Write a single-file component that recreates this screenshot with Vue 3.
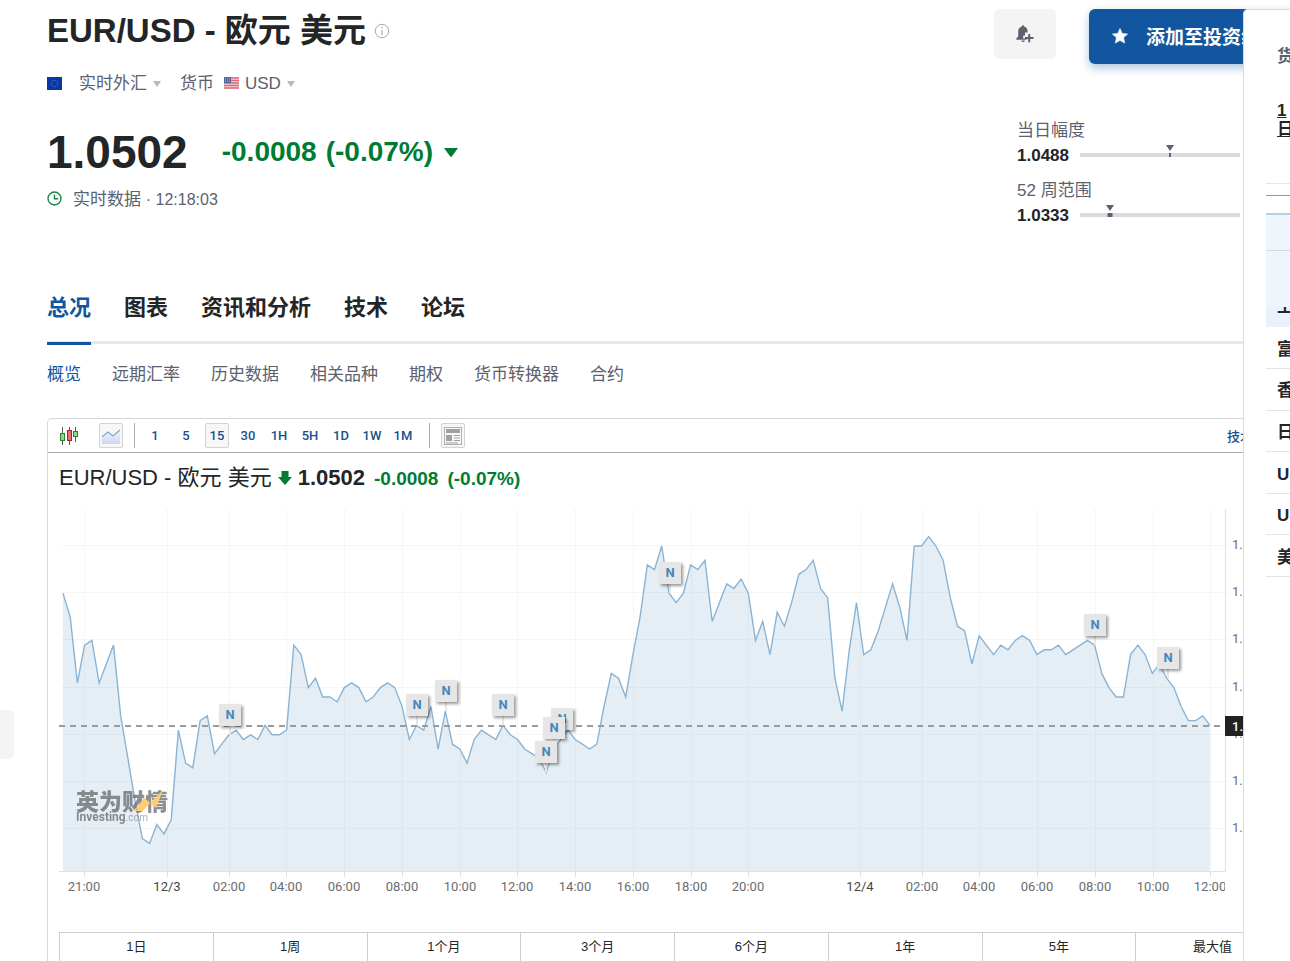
<script setup>
const tabs = ['总况', '图表', '资讯和分析', '技术', '论坛']
const subTabs = ['概览', '远期汇率', '历史数据', '相关品种', '期权', '货币转换器', '合约']
const intervals = ['1', '5', '15', '30', '1H', '5H', '1D', '1W', '1M']
const periods = ['1日', '1周', '1个月', '3个月', '6个月', '1年', '5年', '最大值']
const quotes = ['富时中国A50', '香港恒生指数', '日经225', 'US 30', 'US 500', '美元指数']

const ranges = [
  { label: '当日幅度', low: '1.0488', high: '1.0544', pos: 56, size: 2 },
  { label: '52 周范围', low: '1.0333', high: '1.1214', pos: 19, size: 5 }
]

// Pips below 1.0540, one value for every 15 minutes
const pips = [
  10, 15, 29, 21, 20, 29, 25, 21, 36, 45, 54, 62, 63, 59, 61, 58, 39, 46, 47, 37,
  36, 44, 42, 40, 39, 41, 40, 41, 38, 40, 40, 39, 21, 23, 30, 28, 32, 32, 33, 30,
  29, 30, 33, 32, 30, 29, 30, 34, 41, 38, 39, 34, 43, 35, 42, 43, 46, 41, 39, 40,
  41, 38, 40, 41, 43, 44, 45, 48, 43, 41, 39, 41, 42, 43, 42, 34, 27, 28, 32, 23,
  15, 4, 5, 0, 10, 12, 10, 4, 5, 3, 16, 12, 8, 9, 7, 10, 20, 16, 23, 14,
  17, 12, 6, 5, 3, 9, 11, 28, 35, 22, 12, 23, 22, 18, 13, 8, 13, 20, 0, 0,
  -2, 0, 3, 11, 17, 18, 25, 19, 21, 23, 21, 22, 20, 19, 20, 23, 22, 22, 21, 23,
  22, 21, 20, 21, 27, 30, 32, 32, 23, 21, 23, 27, 25, 28, 30, 34, 37, 37, 36, 38
]
const px = (i) => 4 + (i * 1147) / 159
const py = (p) => 46 + p * 4.72
const line = pips.map((p, i) => `${px(i).toFixed(1)},${py(p).toFixed(1)}`).join(' ')
const area = `4,371 ${line} 1151,371`

const times = [
  [25, '21:00'], [108, '12/3', true], [170, '02:00'], [227, '04:00'], [285, '06:00'],
  [343, '08:00'], [401, '10:00'], [458, '12:00'], [516, '14:00'], [574, '16:00'],
  [632, '18:00'], [689, '20:00'], [801, '12/4', true], [863, '02:00'], [920, '04:00'],
  [978, '06:00'], [1036, '08:00'], [1094, '10:00'], [1151, '12:00']
]
const prices = ['1.0540', '1.0530', '1.0520', '1.0510', '1.0500', '1.0490', '1.0480']
const flags = [
  [160, 204, 23], [347, 194, 49], [376, 180, 53], [433, 194, 61], [492, 208, 70],
  [484, 217, 69], [476, 241, 67], [600, 62, 84], [1025, 114, 143], [1098, 147, 153]
]
</script>

<template>
  <div class="page">
    <button class="drawer" aria-label="展开"></button>
    <main>
      <header class="top">
        <section class="instrument">
          <h1>
            EUR/USD - 欧元 美元
            <svg class="info" width="16" height="16" viewBox="0 0 16 16" fill="none" stroke="#a5a8ad">
              <circle cx="8" cy="8" r="6.7" /><path d="M8 7v5M8 4v1.5" stroke-width="1.2" />
            </svg>
          </h1>
          <div class="market">
            <svg class="eu" width="15" height="13" viewBox="0 0 15 13">
              <rect width="15" height="13" fill="#0a37a5" />
              <circle cx="7.5" cy="6.5" r="3.2" fill="none" stroke="#637a9c" stroke-dasharray="1 .7" />
            </svg>
            <a href="#market">实时外汇</a><i class="caret"></i>
            <span class="currency">货币</span>
            <svg class="us" width="15" height="12" viewBox="0 0 15 12">
              <rect width="15" height="12" fill="#f4dadd" />
              <path d="M0 1h15M0 3.5h15M0 6h15M0 8.5h15M0 11h15" stroke="#db6874" stroke-width="1.3" />
              <rect width="7" height="6" fill="#59659a" />
              <path d="M1 1.5h5M1 3h5M1 4.5h5" stroke="#aab0cf" stroke-dasharray="1 1" stroke-width=".7" />
            </svg>
            <a href="#usd">USD</a><i class="caret"></i>
          </div>
          <div class="price">
            <strong>1.0502</strong>
            <span class="change">-0.0008</span><span class="percent">(-0.07%)</span>
            <svg width="14" height="9" viewBox="0 0 14 9"><path d="M0 0h14L7.8 8.4q-.8.9-1.6 0z" fill="#007c32" /></svg>
          </div>
          <div class="time">
            <svg width="15" height="15" viewBox="0 0 15 15" fill="none" stroke="#1b8547" stroke-width="1.4">
              <circle cx="7.5" cy="7.5" r="6.5" /><path d="M7.5 3.5v4.2h3.7" />
            </svg>
            <span>实时数据 <small>· 12:18:03</small></span>
          </div>
        </section>
        <section class="side-actions">
          <div class="actions">
            <button class="alert" aria-label="创建提醒">
              <svg width="20" height="20" viewBox="0 0 20 20" fill="#5b616e">
                <path d="M8 1.2q1.1 0 1.2 1.2 3.4 1 3.4 5.1v1H10v3H8.2v3h3.4v1.2H1.3v-1.3l1.9-2V7.5q0-4.1 3.6-5.1Q7 1.2 8 1.2zM6.2 16.4h3.7q-.3 1.5-1.8 1.5t-1.9-1.5z" />
                <path d="M13.2 9.9h2v3.2h3.3v2h-3.3v3.2h-2v-3.2H9.9v-2h3.3z" />
              </svg>
            </button>
            <button class="add">
              <svg width="16" height="16" viewBox="0 0 16 16"><path d="M8 .4l2.2 5 5.4.6-4 3.6 1.1 5.5L8 12.4l-4.7 2.7 1.1-5.5L.4 6l5.4-.6z" fill="#fff" stroke="#fff" stroke-width=".6" stroke-linejoin="round" /></svg>
              <span>添加至投资组合</span>
            </button>
          </div>
          <div v-for="r in ranges" :key="r.label" class="range">
            <span class="range-label">{{ r.label }}</span>
            <b>{{ r.low }}</b>
            <div class="track"><i class="mark" :style="{ left: r.pos + '%', width: r.size + 'px' }"></i><i class="pointer" :style="{ left: r.pos + '%' }"></i></div>
            <b>{{ r.high }}</b>
          </div>
        </section>
      </header>

      <nav class="tabs">
        <a v-for="(t, i) in tabs" :key="t" href="#tab" :class="{ active: i === 0 }">{{ t }}</a>
      </nav>
      <nav class="subtabs">
        <a v-for="(t, i) in subTabs" :key="t" href="#subtab" :class="{ active: i === 0 }">{{ t }}</a>
      </nav>

      <section class="panel">
        <div class="toolbar">
          <button class="tool" aria-label="蜡烛图">
            <svg width="20" height="20" viewBox="0 0 20 20">
              <path d="M3.5 1v18M10.5 1v18M16.5 1v15" stroke="#555" />
              <rect x="1.5" y="7.5" width="4" height="7" fill="#8fd58e" stroke="#25852b" />
              <rect x="8.5" y="4.5" width="4" height="10" fill="#f06b6b" stroke="#b51f24" />
              <rect x="14.5" y="5.5" width="4" height="5" fill="#8fe08c" stroke="#25852b" />
            </svg>
          </button>
          <button class="tool boxed area-tool" aria-label="面积图">
            <svg width="20" height="16" viewBox="0 0 20 16">
              <defs><linearGradient id="tint" x1="0" y1="0" x2="0" y2="1"><stop stop-color="#eef2fa" /><stop offset="1" stop-color="#cbd9f0" /></linearGradient></defs>
              <path d="M1 10l6-5 5 4 7-6v13H1z" fill="url(#tint)" /><path d="M1 9l6-5 5 4 7-6" fill="none" stroke="#7fa5cb" stroke-width="1.2" />
            </svg>
          </button>
          <i class="divider"></i>
          <div class="intervals">
            <button v-for="n in intervals" :key="n" class="tool" :class="{ boxed: n === '15' }">{{ n }}</button>
          </div>
          <i class="divider"></i>
          <button class="tool boxed news-tool" aria-label="新闻">
            <svg width="20" height="20" viewBox="0 0 20 20" fill="#a0a0a0">
              <path d="M1 1.5h18M1.5 1v18M18.5 1v18M1 18.5h18" stroke="#b0b0b0" /><path d="M3 3h14v4H3zM3 9h6v6H3zM11 9h6v1h-6zM11 11.5h6v1h-6zM11 14h6v1h-6zM3 16.5h12v1H3z" />
            </svg>
          </button>
          <a class="technical" href="#technical">技术图表</a>
        </div>
        <h2>
          <span>EUR/USD - 欧元 美元</span>
          <svg width="14" height="14" viewBox="0 0 14 14"><path d="M3.5 0h7v6H14l-7 8-7-8h3.5z" fill="#007c32" /></svg>
          <b>1.0502</b><b class="change">-0.0008</b><b class="percent">(-0.07%)</b>
        </h2>
        <svg class="chart" viewBox="0 0 1231 432" role="img" aria-label="EUR/USD">
          <defs>
            <clipPath id="plot"><rect x="0" y="0" width="1166" height="432" /></clipPath>
            <filter id="shade" x="-30%" y="-30%" width="180%" height="180%"><feDropShadow dx="2" dy="2" stdDeviation="1.5" flood-opacity=".4" /></filter>
          </defs>
          <g stroke="#f6f6f6">
            <path v-for="(p, i) in prices" :key="p" :d="`M2 ${46 + Math.round(i * 47.2) - 0.5}H1170`" />
            <path v-for="t in times" :key="t[0]" :d="`M${t[0] + 0.5} 9V376`" />
          </g>
          <polygon :points="area" fill="#4583b8" fill-opacity=".14" />
          <polyline :points="line" fill="none" stroke="#8ab4d4" stroke-width="1.4" />
          <path d="M0 371.5H1166.5V9" fill="none" stroke="#dde0e4" />
          <path v-for="t in times" :key="'t' + t[0]" :d="`M${t[0] + 0.5} 371v6`" stroke="#dce3ea" />
          <path d="M0 226H1163" stroke="#999c9f" stroke-width="2" stroke-dasharray="6 5" />
          <g clip-path="url(#plot)" class="axis">
            <text v-for="t in times" :key="'l' + t[0]" :x="t[0]" y="391" text-anchor="middle" :class="{ day: t[2] }">{{ t[1] }}</text>
          </g>
          <g class="axis"><text v-for="(p, i) in prices" :key="'p' + p" x="1173" :y="49 + Math.round(i * 47.2)">{{ p }}</text></g>
          <rect x="1166" y="216" width="60" height="20" fill="#222" /><text x="1173" y="231" class="current">1.0502</text>
          <g class="watermark">
            <text x="17" y="310" class="wm-cn">英为财情</text>
            <path d="M75 311l10-13 6 5 13-13-7 18-6-5-7 8z" fill="#ffbd4a" />
            <text x="17" y="321" class="wm-en">Investing<tspan class="wm-com">.com</tspan></text>
          </g>
          <g v-for="f in flags" :key="f[0]">
            <path :d="`M${f[0] + 11} ${f[1] + 22}V${py(pips[f[2]])}`" stroke="#e6e7e9" stroke-width="2" />
            <rect :x="f[0]" :y="f[1]" width="22" height="22" fill="#e6e6e6" filter="url(#shade)" />
            <text :x="f[0] + 11" :y="f[1] + 15" text-anchor="middle" class="flag">N</text>
          </g>
        </svg>
        <div class="periods"><button v-for="p in periods" :key="p">{{ p }}</button></div>
      </section>
    </main>

    <aside>
      <h3>货币</h3>
      <a class="day-link" href="#day">1<br />日</a>
      <hr class="light" /><hr class="dark" />
      <div class="table-head"><i></i></div>
      <div class="first-row">上证指数</div>
      <table><tbody><tr v-for="q in quotes" :key="q"><td>{{ q }}</td></tr></tbody></table>
    </aside>
  </div>
</template>

<style>
body { margin: 0; background: #fff; }
</style>

<style scoped>
* { box-sizing: border-box; }
.page { position: relative; min-height: 100vh; overflow: hidden; color: #232526; font-family: "Liberation Sans", "Noto Sans CJK SC", sans-serif; }
main { margin: 0 -12px 0 47px; }
button { padding: 0; border: 0; background: none; font: inherit; color: inherit; cursor: pointer; }
a { color: inherit; text-decoration: none; }
h1, h2, h3 { margin: 0; }
svg { display: block; flex: none; }
.drawer { position: absolute; left: 0; top: 710px; width: 14px; height: 49px; background: #f4f4f4; border-radius: 0 5px 5px 0; }
.top { display: flex; justify-content: space-between; height: 281px; }
h1 { display: flex; align-items: center; gap: 8px; height: 61px; font-size: 33px; line-height: 40px; white-space: nowrap; }
.market { display: flex; align-items: center; height: 46px; font-size: 17px; line-height: 24px; color: #5b616e; }
.eu { margin: 0 17px 2px 0; }
.caret { width: 0; border: 4px solid transparent; border-top: 6px solid #b5bac1; border-bottom: 0; margin-left: 6px; }
.currency { margin-left: 19px; }
.us { margin: 0 6px 2px 10px; }
.price { display: flex; align-items: center; height: 90px; font-size: 28px; font-weight: 700; color: #007c32; }
.price strong { font-size: 46px; color: #232526; }
.price .change { margin-left: 34px; }
.price .percent { margin: 0 11px 0 9px; }
.time { display: flex; align-items: center; gap: 11px; font-size: 17px; line-height: 24px; margin-top: -9px; color: #5b616e; }
.time svg { margin-bottom: 4px; }
.time small { font-size: 16px; }
.side-actions { width: 308px; padding-top: 9px; }
.actions { display: flex; align-items: flex-start; gap: 33px; height: 109px; }
.alert { display: grid; place-items: center; width: 62px; height: 50px; border-radius: 6px; background: #f4f4f4; }
.add { display: flex; align-items: center; gap: 18px; flex: 1; height: 55px; padding: 0 0 2px 23px; border-radius: 6px; background: #1256a0; color: #fff; font-size: 19px; font-weight: 700; white-space: nowrap; box-shadow: 0 4px 10px rgba(18, 86, 160, .35); }
.range { display: grid; grid-template-columns: 52px 160px 52px; column-gap: 11px; align-items: center; margin-left: 23px; height: 60px; align-content: start; font-size: 17px; line-height: 25px; }
.range-label { grid-column: 1 / -1; color: #5b616e; }
.track { position: relative; height: 4px; margin-bottom: 2px; background: #d9dbde; }
.mark { position: absolute; top: 0; height: 4px; background: #5b616e; transform: translateX(-50%); }
.pointer { position: absolute; top: -8px; border: 4px solid transparent; border-top: 6px solid #5b616e; border-bottom: 0; transform: translateX(-50%); }
.tabs { display: flex; gap: 33px; height: 63px; border-bottom: 3px solid #e6e9eb; font-size: 22px; line-height: 32px; font-weight: 700; }
.tabs a { height: 64px; padding-top: 11px; }
.tabs .active { color: #1256a0; border-bottom: 3px solid #1256a0; }
.subtabs { display: flex; gap: 31px; height: 74px; padding-top: 19px; font-size: 17px; line-height: 24px; color: #5b616e; }
.subtabs .active { color: #1256a0; }
.panel { border: 1px solid #d5d7da; border-bottom: 0; border-radius: 5px 5px 0 0; }
.toolbar { display: flex; align-items: center; height: 34px; padding: 0 22px 0 9px; border-bottom: 1px solid #aaa; font: 500 13px Roboto, "Noto Sans CJK SC", sans-serif; color: #1b4f8c; }
.tool { display: grid; place-items: center; width: 24px; height: 25px; }
.boxed { border: 1px solid #d2d3d5; border-radius: 2px; background: #f7f7f7; }
.area-tool { margin-left: 18px; }
.divider { width: 1px; height: 25px; margin: 0 0 0 11px; background: #aaa; }
.intervals { display: flex; gap: 7px; margin: 0 3px 0 8px; }
.news-tool { margin-left: 11px; }
.technical { margin-left: auto; }
h2 { display: flex; align-items: baseline; height: 47px; padding: 12px 0 0 11px; font-size: 22px; line-height: 26px; font-weight: 400; white-space: nowrap; }
h2 svg { margin: 0 6px; }
h2 .change, h2 .percent { margin-left: 9px; font-size: 19px; color: #007c32; }
.chart { width: calc(100% - 22px); height: auto; margin-left: 11px; }
.axis, .current { font: 13px Roboto, sans-serif; fill: #6a6d70; }
.axis .day { fill: #444; }
.current { font-weight: 500; fill: #fff; }
.flag { font: 700 13px Roboto, sans-serif; fill: #4386c1; }
.watermark { opacity: .75; }
.wm-cn { font: 900 23px "Noto Sans CJK SC", sans-serif; fill: #66696b; }
.wm-en { font: 700 12px Roboto, sans-serif; fill: #66696b; }
.wm-com { font-size: 10px; font-weight: 400; fill: #909395; }
.periods { display: grid; grid-template-columns: repeat(8, 1fr); margin: 0 11px; border: 1px solid #ccced0; border-width: 1px 0 0 1px; font: 13px "Liberation Sans", "Noto Sans CJK SC", sans-serif; }
.periods button { height: 29px; padding-bottom: 5px; border-right: 1px solid #ccced0; }
aside { position: absolute; top: 9px; right: 0; bottom: 0; width: 47px; padding-left: 22px; overflow: hidden; border: 1px solid #d9dbde; border-width: 1px 0 0 1px; border-radius: 5px 0 0 0; background: #fff; font-size: 17px; font-weight: 700; white-space: nowrap; }
h3 { margin: 35px 0 0 11px; font-size: 17px; line-height: 24px; color: #5b616e; }
.day-link { display: block; margin: 32px 0 0 11px; line-height: 19px; text-decoration: underline; }
hr { height: 1px; margin: 0; border: 0; }
.light { margin-top: 44px; background: #e4e6e8; }
.dark { margin-top: 11px; background: #999; }
.table-head { height: 94px; margin-top: 17px; padding-top: 35px; border-top: 2px solid #b9cfe2; background: #eff5fc; }
.table-head i { display: block; height: 1px; background: #d5dae2; }
.first-row { display: flex; align-items: flex-end; height: 20px; padding: 0 0 8px 11px; line-height: 24px; overflow: hidden; background: #e8f1fc; }
table { width: 100%; height: 250px; border-collapse: collapse; table-layout: fixed; }
td { height: 41px; padding: 4px 0 0 11px; border-bottom: 1px solid #e2e4e6; line-height: 20px; }
</style>
